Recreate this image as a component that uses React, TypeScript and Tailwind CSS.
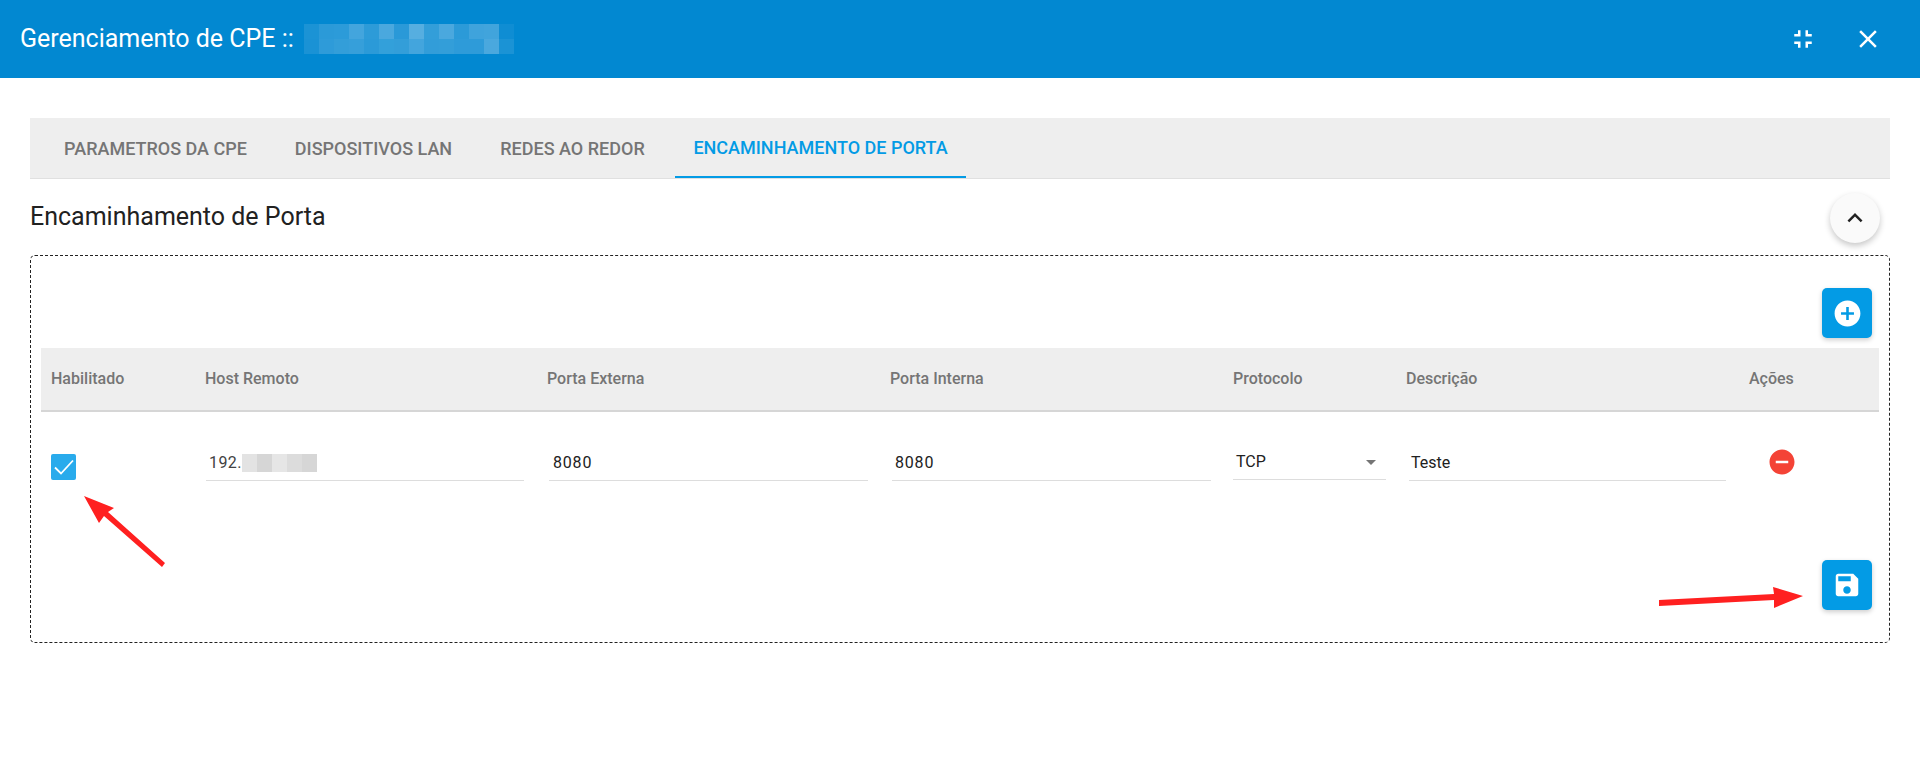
import React from 'react';

const MatIcon = ({ d, className }: { d: string; className?: string }) => (
  <svg viewBox="0 0 24 24" className={className} fill="currentColor">
    <path d={d} />
  </svg>
);

const icons = {
  shrink: 'M5 16h3v3h2v-5H5v2zm3-8H5v2h5V5H8v3zm6 11h2v-3h3v-2h-5v5zm2-11V5h-2v5h5V8h-3z',
  close: 'M19 6.41L17.59 5 12 10.59 6.41 5 5 6.41 10.59 12 5 17.59 6.41 19 12 13.41 17.59 19 19 17.59 13.41 12z',
  up: 'M12 8l-6 6 1.41 1.41L12 10.83l4.59 4.58L18 14z',
  add: 'M12 2C6.48 2 2 6.48 2 12s4.48 10 10 10 10-4.48 10-10S17.52 2 12 2zm5 11h-4v4h-2v-4H7v-2h4V7h2v4h4v2z',
  remove: 'M12 2C6.48 2 2 6.48 2 12s4.48 10 10 10 10-4.48 10-10S17.52 2 12 2zm5 11H7v-2h10v2z',
  save: 'M17 3H5c-1.11 0-2 .9-2 2v14c0 1.1.89 2 2 2h14c1.1 0 2-.9 2-2V7l-4-4zm-5 16c-1.66 0-3-1.34-3-3s1.34-3 3-3 3 1.34 3 3-1.34 3-3 3zm3-10H5V5h10v4z',
};

// pixelated bits hiding the device name in the title
const titleBlur = [
  ['bg-[#1b93d5]', 'bg-[#2b9ad8]', 'bg-[#2c9bd9]', 'bg-[#43a5dd]', 'bg-[#2d9bd8]', 'bg-[#4aa8de]', 'bg-[#2a99d8]', 'bg-[#56aee0]', 'bg-[#339ed9]', 'bg-[#4aa8de]', 'bg-[#2b9ad8]', 'bg-[#3fa3dc]', 'bg-[#41a4dc]', 'bg-[#0f8dd3]'],
  ['bg-[#1a92d5]', 'bg-[#2e9bd9]', 'bg-[#339ed9]', 'bg-[#369fda]', 'bg-[#2b9ad8]', 'bg-[#33a0da]', 'bg-[#339ed9]', 'bg-[#43a5dd]', 'bg-[#329dd9]', 'bg-[#339ed9]', 'bg-[#2e9bd9]', 'bg-[#2e9bd9]', 'bg-[#4aa8de]', 'bg-[#1b93d5]'],
];

const hostBlur = ['bg-[#e3e3e3]', 'bg-[#d6d6d6]', 'bg-[#e6e6e6]', 'bg-[#dcdcdc]', 'bg-[#d6d6d6]'];

const tabs = [
  { label: 'Parametros da CPE', w: 'w-[221px]' },
  { label: 'Dispositivos LAN', w: 'w-[215px]' },
  { label: 'Redes ao redor', w: 'w-[183px]' },
];

const columns = [
  { label: 'Habilitado', w: 'w-[154px]' },
  { label: 'Host Remoto', w: 'w-[342px]' },
  { label: 'Porta Externa', w: 'w-[343px]' },
  { label: 'Porta Interna', w: 'w-[343px]' },
  { label: 'Protocolo', w: 'w-[173px]' },
  { label: 'Descrição', w: 'w-[343px]' },
  { label: 'Ações', w: 'w-[140px]' },
];

const App: React.FC = () => {
  return (
    <div className="relative h-[760px] w-[1920px] overflow-hidden bg-white font-['Roboto',sans-serif]">
      {/* Dialog title */}
      <header className="flex h-[78px] items-center justify-between bg-[#0288d1] pl-[20px] pr-[37px] text-white">
        <div className="flex items-center">
          <h1 className="text-[25px] font-normal">Gerenciamento de CPE ::</h1>
          <div className="ml-[10px] flex flex-col">
            {titleBlur.map((row, i) => (
              <div key={i} className="flex">
                {row.map((c, j) => (
                  <div key={j} className={`h-[15px] w-[15px] ${c}`} />
                ))}
              </div>
            ))}
          </div>
        </div>
        <div className="flex items-center gap-[35px]">
          <MatIcon d={icons.shrink} className="h-[30px] w-[30px]" />
          <MatIcon d={icons.close} className="h-[30px] w-[30px]" />
        </div>
      </header>

      <main className="px-[30px] pt-[40px]">
        {/* Tabs */}
        <nav className="flex h-[61px] border-b border-[#e0e0e0] bg-[#eeeeee] pl-[15px]">
          {tabs.map((t) => (
            <div
              key={t.label}
              className={`flex items-center justify-center text-[18px] font-medium uppercase text-[#757575] ${t.w}`}
            >
              {t.label}
            </div>
          ))}
          <div className="ml-[11px] flex w-[291px] items-center justify-center border-b-2 border-[#039be5] text-[18px] font-medium uppercase text-[#039be5]">
            Encaminhamento de porta
          </div>
        </nav>

        {/* Section title */}
        <div className="flex items-start justify-between pb-[12px] pr-[10px] pt-[14px]">
          <h2 className="pt-[10px] text-[25px] font-normal leading-[28px] text-[#212121]">Encaminhamento de Porta</h2>
          <button className="flex h-[50px] w-[50px] items-center justify-center rounded-full bg-[#fafafa] text-[#212121] shadow-[0_3px_6px_rgba(0,0,0,0.22)]">
            <MatIcon d={icons.up} className="h-[30px] w-[30px]" />
          </button>
        </div>

        {/* Dashed panel */}
        <section className="h-[388px] rounded-[5px] border border-dashed border-[#222222] px-[10px] pt-[32px]">
          <div className="flex justify-end pr-[7px]">
            <button className="flex h-[50px] w-[50px] items-center justify-center rounded-[5px] bg-[#039be5] text-white shadow-[0_2px_5px_rgba(0,0,0,0.2)]">
              <MatIcon d={icons.add} className="h-[31px] w-[31px]" />
            </button>
          </div>

          <div className="mt-[10px] flex h-[64px] items-center border-b-2 border-[#d6d6d6] bg-[#eeeeee]">
            {columns.map((c) => (
              <div key={c.label} className={`pl-[10px] text-[16px] font-medium text-[#757575] ${c.w}`}>
                {c.label}
              </div>
            ))}
          </div>

          {/* Row */}
          <div className="flex pt-[34px] text-[16px] text-[#212121]">
            <div className="w-[154px] pl-[10px] pt-[8px]">
              <div className="flex h-[26px] w-[25px] items-center justify-center rounded-[2px] bg-[#29abec]">
                <svg viewBox="0 0 24 24" className="h-[24px] w-[24px]" fill="none" stroke="white" strokeWidth="1.8">
                  <path d="M3 12.5l6 6L21 5.5" />
                </svg>
              </div>
            </div>
            <div className="w-[342px] pl-[11px] pr-[13px]">
              <div className="flex h-[35px] items-center border-b border-[#dddddd] pb-[1px] pl-[3px] text-[#424242]">
                <span className="tracking-[0.4px]">192.</span>
                <div className="flex">
                  {hostBlur.map((c, i) => (
                    <div key={i} className={`h-[18px] w-[15px] ${c}`} />
                  ))}
                </div>
              </div>
            </div>
            <div className="w-[343px] px-[12px]">
              <div className="flex h-[35px] items-center border-b border-[#dddddd] pb-[1px] pl-[4px] tracking-[0.8px]">8080</div>
            </div>
            <div className="w-[343px] px-[12px]">
              <div className="flex h-[35px] items-center border-b border-[#dddddd] pb-[1px] pl-[3px] tracking-[0.8px]">8080</div>
            </div>
            <div className="w-[173px] px-[10px]">
              <div className="flex h-[34px] items-center justify-between border-b border-[#dddddd] pb-[1px] pl-[3px] pr-[10px]">
                TCP
                <div className="h-0 w-0 border-x-[5px] border-t-[5px] border-x-transparent border-t-[#757575]" />
              </div>
            </div>
            <div className="w-[343px] px-[13px]">
              <div className="flex h-[35px] items-center border-b border-[#dddddd] pb-[1px] pl-[2px]">Teste</div>
            </div>
            <div className="w-[140px] pl-[28px] pt-[1px] text-[#f44336]">
              <MatIcon d={icons.remove} className="h-[30px] w-[30px]" />
            </div>
          </div>

          <div className="mt-[79px] flex justify-end pr-[7px]">
            <button className="flex h-[50px] w-[50px] items-center justify-center rounded-[5px] bg-[#039be5] text-white shadow-[0_2px_5px_rgba(0,0,0,0.2)]">
              <MatIcon d={icons.save} className="h-[30px] w-[30px]" />
            </button>
          </div>
        </section>
      </main>

      {/* Red annotation arrows */}
      <svg className="pointer-events-none absolute left-0 top-0 h-[760px] w-[1920px]" viewBox="0 0 1920 760" fill="#ff2020">
        <polygon points="165,563 162,567 104,516 99,523 84,496 114,508 108,512" />
        <polygon points="1659,600 1774,594 1773,587 1803,596 1774,608 1774,600 1659,606" />
      </svg>
    </div>
  );
};

export default App;
